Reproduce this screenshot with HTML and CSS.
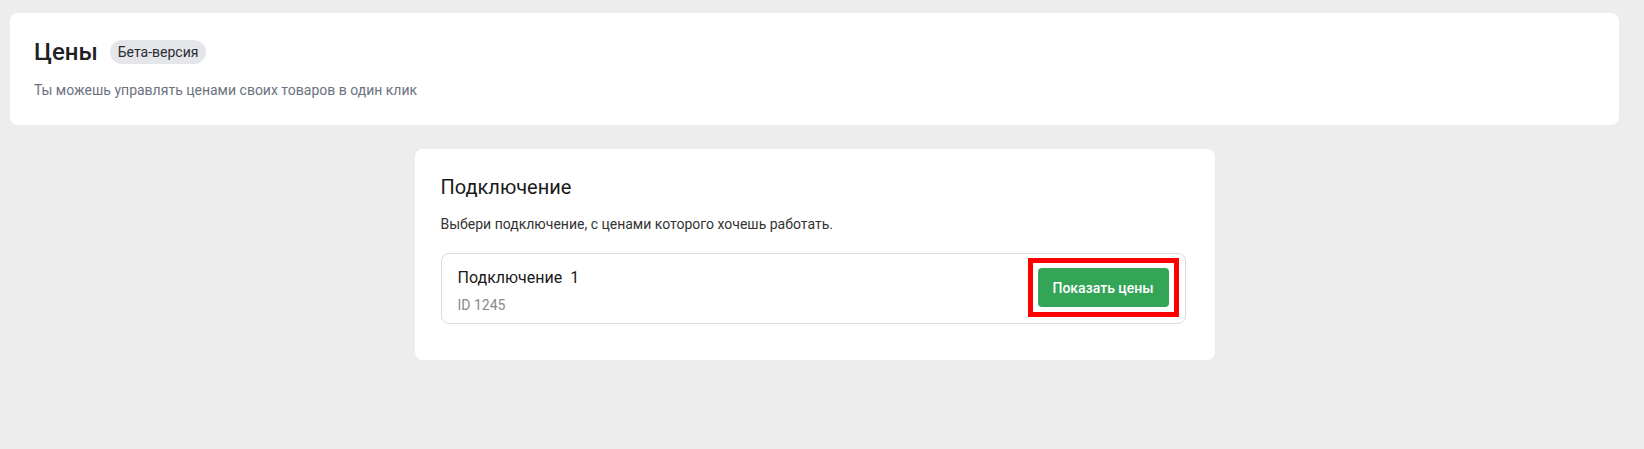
FILE: index.html
```html
<!doctype html>
<html lang="ru">
  <head>
    <meta charset="utf-8">
    <title>Цены</title>
    <link rel="stylesheet" href="styles.css">
  </head>
  <body>
    <main class="page">
      <section class="header-card">
        <div class="header-title">
          <h1>Цены</h1>
          <span class="badge">Бета-версия</span>
        </div>
        <p class="header-sub">Ты можешь управлять ценами своих товаров в один клик</p>
      </section>

      <section class="connect-card">
        <h2>Подключение</h2>
        <p class="connect-desc">Выбери подключение, с ценами которого хочешь работать.</p>
        <div class="connection">
          <div class="connection-info">
            <div class="connection-name">Подключение&nbsp; 1</div>
            <div class="connection-id">ID 1245</div>
          </div>
          <span class="highlight">
            <button class="btn-show" type="button">Показать цены</button>
          </span>
        </div>
      </section>
    </main>
  </body>
</html>
```

FILE: styles.css
```css
body {
  margin: 0;
  background: #ededed;
  font-family: Roboto, "Noto Sans", Arial, sans-serif;
  color: #1f2125;
}
.page {
  display: flex;
  flex-direction: column;
  align-items: center;
  gap: 24px;
  padding: 13px 25px 0 10px;
}
.header-card {
  align-self: stretch;
  background: #fff;
  border-radius: 8px;
  padding: 23px 24px 25px;
}
.header-title {
  display: flex;
  align-items: center;
  gap: 12px;
}
h1 {
  margin: 0;
  font-size: 24px;
  line-height: 32px;
  font-weight: 500;
}
.badge {
  background: #e4e6ea;
  border-radius: 12px;
  height: 24px;
  line-height: 24px;
  padding: 0 8px;
  font-size: 14px;
  color: #2b2d31;
}
.header-sub {
  margin: 12px 0 0;
  font-size: 14px;
  line-height: 20px;
  color: #6c7280;
}
.connect-card {
  width: 800px;
  box-sizing: border-box;
  background: #fff;
  border-radius: 8px;
  padding: 24px 29px 36px 26px;
}
h2 {
  margin: 0;
  font-size: 20px;
  line-height: 28px;
  font-weight: 400;
  color: #1a1a1a;
}
.connect-desc {
  margin: 13px 0 0;
  font-size: 14px;
  line-height: 20px;
  color: #333;
}
.connection {
  margin-top: 19px;
  display: flex;
  align-items: flex-start;
  justify-content: space-between;
  border: 1px solid #dcdcdc;
  border-radius: 8px;
  padding: 14px 16px 9px;
}
.connection-name {
  font-size: 16px;
  line-height: 20px;
  color: #1a1a1a;
}
.connection-id {
  margin-top: 8px;
  font-size: 14px;
  line-height: 18px;
  color: #8a8a8a;
}
.highlight {
  display: flex;
  margin: -10px -10px -10px 0;
  padding: 5px;
  border: 5px solid #f00;
}
.btn-show {
  height: 39px;
  width: 131px;
  border: none;
  border-radius: 4px;
  background: #34a557;
  color: #fff;
  font-family: inherit;
  font-size: 14px;
  font-weight: 500;
  cursor: pointer;
}
```
